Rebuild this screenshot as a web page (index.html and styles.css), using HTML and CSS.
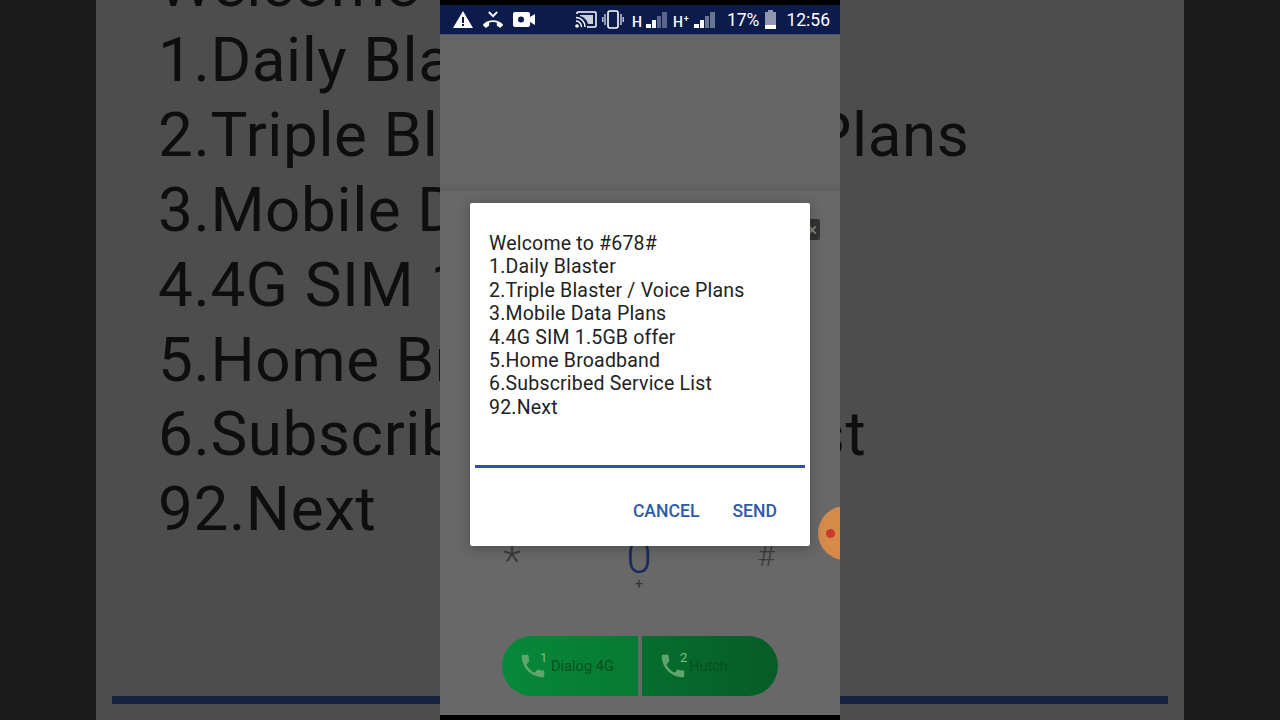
FILE: index.html
```html
<!DOCTYPE html>
<html lang="en">
<head>
<meta charset="utf-8">
<title>USSD dialog</title>
<link rel="stylesheet" href="styles.css">
</head>
<body>
<div class="stage">
  <div class="backdrop">
    <div class="backdrop-text">
      <div>Welcome to #678#</div>
      <div>1.Daily Blaster</div>
      <div>2.Triple Blaster / Voice Plans</div>
      <div>3.Mobile Data Plans</div>
      <div>4.4G SIM 1.5GB offer</div>
      <div>5.Home Broadband</div>
      <div>6.Subscribed Service List</div>
      <div>92.Next</div>
    </div>
    <div class="backdrop-bar"></div>
  </div>

  <div class="phone">
    <div class="statusbar">
      <div class="status-group">
        <svg class="ic-warn" viewBox="0 0 20 17"><path fill="#fff" fill-rule="evenodd" d="M10 0 20 17H0ZM9 6v6h2V6Zm0 7v2h2v-2Z"/></svg>
        <svg class="ic-missed" viewBox="0 0 24 20"><path d="M7 1l5 5 5-5" fill="none" stroke="#fff" stroke-width="2.2"/><path fill="#fff" transform="translate(0 4)" d="M12 9c-1.600 0-3.150.25-4.600.72v3.100c0 .39-.23.74-.56.9-.98.49-1.870 1.120-2.660 1.850-.18.18-.43.28-.7.28-.28 0-.53-.11-.71-.29L.29 13.080c-.18-.17-.29-.42-.29-.7 0-.28.11-.53.29-.71C3.340 8.780 7.460 7 12 7s8.660 1.780 11.710 4.670c.18.18.29.43.29.71 0 .28-.11.53-.29.71l-2.480 2.480c-.18.18-.43.29-.71.29-.27 0-.52-.11-.7-.28-.79-.74-1.690-1.360-2.670-1.850-.33-.16-.56-.5-.56-.9v-3.100C15.150 9.250 13.600 9 12 9z"/></svg>
        <svg class="ic-video" viewBox="0 0 22 15"><path fill="#fff" fill-rule="evenodd" d="M2 0h13a2 2 0 0 1 2 2v3l5-3v11l-5-3v3a2 2 0 0 1-2 2H2a2 2 0 0 1-2-2V2a2 2 0 0 1 2-2Zm6 4.500a3 3 0 1 0 0 6 3 3 0 0 0 0-6Z"/></svg>
      </div>
      <div class="status-group">
        <svg class="ic-cast" viewBox="0 0 22 17"><path fill="none" stroke="#fff" stroke-width="1.500" d="M2 3V2a1 1 0 0 1 1-1h17a1 1 0 0 1 1 1v13a1 1 0 0 1-1 1h-8"/><path fill="none" stroke="#fff" stroke-width="1.500" d="M1 6.500c5 0 9 4 9 9.500M1 10c3 0 5.500 2.500 5.500 6"/><circle cx="2" cy="15" r="1.800" fill="#fff"/><path fill="#c9cfdc" d="M5 4h13v9h-5c-1-4-4-7-8-8Z"/></svg>
        <svg class="ic-vibrate" viewBox="0 0 22 19"><rect x="6" y="1" width="10" height="17" rx="2" fill="none" stroke="#fff" stroke-width="1.600"/><path d="M3 4v11M19 4v11M.8 7v5M21.200 7v5" stroke="#c9cfdc" stroke-width="1.400"/></svg>
        <span class="net">H</span>
        <svg class="ic-signal" viewBox="0 0 21 16"><rect x="0" y="12" width="5" height="4" fill="#fff"/><rect x="6" y="8" width="4" height="8" fill="#fff"/><rect x="11" y="4" width="4" height="12" fill="#59668a"/><rect x="16" y="0" width="5" height="16" fill="#59668a"/></svg>
        <span class="net net-plus">H<sup>+</sup></span>
        <svg class="ic-signal" viewBox="0 0 21 16"><rect x="0" y="12" width="5" height="4" fill="#fff"/><rect x="6" y="8" width="4" height="8" fill="#fff"/><rect x="11" y="4" width="4" height="12" fill="#6a7594"/><rect x="16" y="0" width="5" height="16" fill="#6a7594"/></svg>
        <span class="pct">17%</span>
        <svg class="ic-batt" viewBox="0 0 11 19"><path fill="#8f98ae" d="M3 0h5v2h3v17H0V2h3Z"/><rect y="15" width="11" height="4" fill="#fff"/></svg>
        <span class="clock">12:56</span>
      </div>
    </div>

    <div class="dial">
      <div class="number-row"><div class="backspace">×</div></div>
      <div class="keypad">
        <div class="key key-star">*</div>
        <div class="key key-zero">0<small>+</small></div>
        <div class="key key-hash">#</div>
      </div>
      <div class="calls">
        <div class="call call-l">
          <svg class="ic-phone" viewBox="0 0 24 24"><path fill="#5fa56c" d="M6.620 10.790c1.440 2.830 3.760 5.140 6.590 6.590l2.200-2.200c.27-.27.67-.36 1.020-.24 1.120.37 2.330.57 3.570.57.550 0 1 .45 1 1V20c0 .55-.45 1-1 1-9.390 0-17-7.610-17-17 0-.55.45-1 1-1h3.500c.55 0 1 .45 1 1 0 1.250.2 2.450.57 3.570.11.35.03.74-.25 1.020l-2.200 2.200z"/></svg>
          <sup>1</sup><span>Dialog 4G</span>
        </div>
        <div class="call call-r">
          <svg class="ic-phone" viewBox="0 0 24 24"><path fill="#5fa56c" d="M6.620 10.790c1.440 2.830 3.760 5.140 6.590 6.590l2.200-2.200c.27-.27.67-.36 1.020-.24 1.120.37 2.330.57 3.570.57.550 0 1 .45 1 1V20c0 .55-.45 1-1 1-9.390 0-17-7.610-17-17 0-.55.45-1 1-1h3.500c.55 0 1 .45 1 1 0 1.250.2 2.450.57 3.570.11.35.03.74-.25 1.020l-2.200 2.200z"/></svg>
          <sup>2</sup><span>Hutch</span>
        </div>
      </div>
    </div>
    <div class="navstrip"></div>

    <div class="bubble"><i></i></div>

    <div class="dialog">
      <div class="message">
        <div>Welcome to #678#</div>
        <div>1.Daily Blaster</div>
        <div>2.Triple Blaster / Voice Plans</div>
        <div>3.Mobile Data Plans</div>
        <div>4.4G SIM 1.5GB offer</div>
        <div>5.Home Broadband</div>
        <div>6.Subscribed Service List</div>
        <div>92.Next</div>
      </div>
      <div class="input-line"></div>
      <div class="actions"><span>CANCEL</span><span>SEND</span></div>
    </div>
  </div>
</div>
</body>
</html>
```

FILE: styles.css
```css
* { box-sizing: border-box; }
html, body { margin: 0; height: 100%; background: #1b1b1b; overflow: hidden; }
body { font-family: Roboto, "Liberation Sans", sans-serif; }

.stage {
  width: 1280px;
  height: 720px;
  display: grid;
  grid-template-columns: 1280px;
  grid-template-rows: 720px;
  overflow: hidden;
}
.stage > * { grid-column: 1; grid-row: 1; }

/* blurred, enlarged copy of the phone */
.backdrop {
  margin: 0 96px;
  background: #4d4d4d;
  display: flex;
  flex-direction: column;
  overflow: hidden;
  padding: 0 16px 16px;
}
.backdrop-text {
  margin: -52px 0 0 46px;
  font-size: 62px;
  letter-spacing: .6px;
  line-height: 74.9px;
  color: #0e0e0e;
  white-space: nowrap;
  filter: blur(.7px);
}
.backdrop-bar {
  margin-top: auto;
  height: 8px;
  background: #14213f;
  filter: blur(.5px);
}

/* phone */
.phone {
  position: relative;
  justify-self: center;
  width: 400px;
  height: 720px;
  background: #666;
  display: flex;
  flex-direction: column;
  overflow: hidden;
}
.statusbar {
  height: 35px;
  flex: none;
  border-top: 5px solid #000;
  background: #0b1b4b;
  border-bottom: 1px solid #4a5570;
  padding: 0 10px 0 13px;
  display: flex;
  justify-content: space-between;
  align-items: center;
  color: #fff;
}
.status-group { display: flex; align-items: center; }
.ic-warn { width: 20px; height: 17px; }
.ic-missed { width: 20px; height: 17px; margin-left: 10px; }
.ic-video { width: 22px; height: 15px; margin-left: 10px; }
.ic-cast { width: 22px; height: 17px; }
.ic-vibrate { width: 22px; height: 19px; margin-left: 5px; }
.net { font-size: 14px; font-weight: 500; margin-left: 8px; margin-top: 5px; line-height: 14px; width: 10px; }
.net-plus { margin-left: 6px; width: 16px; white-space: nowrap; }
.net sup { font-size: 9px; line-height: 0; vertical-align: 5px; margin-left: 1px; }
.ic-signal { width: 21px; height: 16px; margin-left: 4px; }
.net-plus + .ic-signal { margin-left: 5px; }
.pct { font-size: 17.5px; margin-left: 12px; line-height: 18px; }
.ic-batt { width: 11px; height: 19px; margin-left: 6px; }
.clock { font-size: 17.5px; margin-left: 10px; line-height: 18px; }

.dial {
  flex: 1;
  margin-top: 156px;
  background: #686868;
  box-shadow: 0 -4px 6px rgba(0, 0, 0, .08);
  display: flex;
  flex-direction: column;
  padding-bottom: 19px;
}
.number-row {
  margin-top: 28px;
  padding-right: 20px;
  display: flex;
  justify-content: flex-end;
}
.backspace {
  width: 20px;
  height: 21px;
  background: #333;
  border-radius: 2px;
  color: #888;
  font-size: 18px;
  line-height: 21px;
  text-align: right;
  padding-right: 3px;
}
.keypad {
  margin-top: auto;
  display: grid;
  grid-template-columns: repeat(3, 127px);
  justify-content: center;
  align-items: start;
  text-align: center;
}
.key { color: #3c3c3c; }
.key-star { font-size: 42px; line-height: 42px; font-weight: 300; margin-left: -2px; padding-top: 6px; }
.key-hash { font-size: 30px; line-height: 36px; font-weight: 300; margin-left: -2px; padding-top: 4px; }
.key-zero { font-size: 46px; line-height: 46px; font-weight: 300; color: #1a2a5c; display: flex; flex-direction: column; align-items: center; margin-left: -2px; }
.key-zero small { font-size: 14px; line-height: 14px; color: #333; font-weight: 400; margin-top: -3px; }

.calls {
  margin-top: 45px;
  display: flex;
  justify-content: center;
  gap: 4px;
}
.call {
  width: 136px;
  height: 60px;
  display: flex;
  align-items: center;
  font-size: 14.6px;
  color: #07501f;
}
.call-l { background: linear-gradient(90deg, #07883a, #067a32); border-radius: 30px 0 0 30px; padding-left: 16px; }
.call-r { background: linear-gradient(90deg, #066e2e, #065c26); border-radius: 0 30px 30px 0; padding-left: 16px; }
.ic-phone { width: 30px; height: 30px; flex: none; }
.call sup { font-size: 13px; color: #7cc08a; line-height: 1; margin: -18px 0 0 -8px; width: 8px; }
.call span { margin-left: 3px; white-space: nowrap; }
.call-r span { margin-left: 1px; }

.navstrip { height: 5px; background: #000; flex: none; }

.bubble {
  position: absolute;
  left: 378px;
  top: 506px;
  width: 54px;
  height: 54px;
  border-radius: 50%;
  background: radial-gradient(circle at 45% 50%, #d98c47 0, #d48a4a 55%, #c78a58 100%);
  display: flex;
  align-items: center;
  padding-left: 8px;
  filter: blur(.5px);
}
.bubble i { width: 9px; height: 9px; border-radius: 50%; background: #c93a2e; }

.dialog {
  position: absolute;
  left: 30px;
  top: 203px;
  width: 340px;
  height: 343px;
  background: #fff;
  border-radius: 2px;
  box-shadow: 0 2px 14px rgba(0, 0, 0, .28);
  display: flex;
  flex-direction: column;
}
.message {
  margin: 29px 0 0 19px;
  font-size: 19.5px;
  letter-spacing: .2px;
  line-height: 23.4px;
  color: #222;
  white-space: nowrap;
}
.input-line {
  margin: 46px 5px 0;
  height: 2.5px;
  background: #2c56a4;
}
.actions {
  margin-top: 33px;
  padding-right: 33px;
  display: flex;
  justify-content: flex-end;
  gap: 33px;
  font-size: 17.6px;
  font-weight: 500;
  line-height: 20px;
  color: #2f5aa8;
}
```
